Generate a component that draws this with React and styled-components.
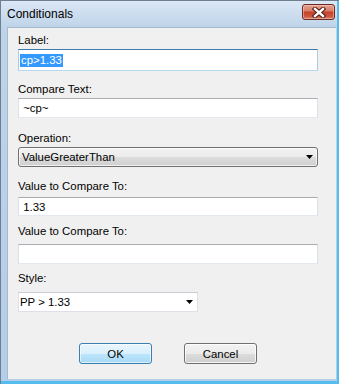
import React from "react"
import styled, { createGlobalStyle } from "styled-components"

const Global = createGlobalStyle`
  html, body { margin: 0; padding: 0; background: #ffffff; }
  body { font-family: "Liberation Sans", Arial, sans-serif; }
`

const Window = styled.div`
  box-sizing: border-box;
  width: 339px;
  height: 384px;
  display: flex;
  flex-direction: column;
  border-left: 1px solid #6f7f90;
  border-top: 1px solid #6f7f90;
  background: linear-gradient(to bottom, #dbe7f4 0px, #bfd4ea 26px, #b4cde8 100%);
  box-shadow: inset -2px -3px 0 #55bdee;
  overflow: hidden;
`

const TitleBar = styled.div`
  height: 26px;
  display: flex;
  align-items: center;
  justify-content: space-between;
  padding: 0 4px 0 6px;
  flex-shrink: 0;
`

const Title = styled.span`
  font-family: "Liberation Sans", Arial, sans-serif;
  font-size: 12px;
  color: #000;
  line-height: 26px;
`

const CloseButton = styled.div`
  align-self: flex-start;
  margin-top: 3px;
  box-sizing: border-box;
  width: 33px;
  height: 16px;
  border: 1px solid #6b2a22;
  border-radius: 3px;
  background: linear-gradient(to bottom, #e7a292 0%, #d9806c 40%, #c5432c 52%, #cc573d 80%, #d9806a 100%);
  box-shadow: inset 0 0 0 1px rgba(255, 220, 210, 0.45);
  display: flex;
  align-items: center;
  justify-content: center;
`

const Client = styled.div`
  box-sizing: border-box;
  width: 329px;
  height: 352px;
  margin-left: 6px;
  flex-shrink: 0;
  background: #f0f0f0;
  border-left: 1px solid #a5b8cc;
  border-top: 1px solid #a5b8cc;
  padding: 5px 18px 0 10px;
  display: flex;
  flex-direction: column;
  font-family: "Liberation Sans", Arial, sans-serif;
  font-size: 11.4px;
  color: #000;
`

const Field = styled.div`
  display: flex;
  flex-direction: column;
  margin-top: ${p => p.$top || 0}px;
`

const Label = styled.div`
  height: 14px;
  line-height: 14px;
  margin-bottom: ${p => p.$gap}px;
  white-space: nowrap;
`

const TextBox = styled.div`
  box-sizing: border-box;
  height: ${p => p.$h || 20}px;
  background: #ffffff;
  border: 1px solid ${p => (p.$focus ? "#a9cde6" : "#dde1e7")};
  border-top-color: ${p => (p.$focus ? "#3d7bad" : "#abadb3")};
  border-bottom-color: ${p => (p.$focus ? "#b7d9ed" : "#e3e9ef")};
  padding-left: 1px;
  display: flex;
  align-items: center;
  white-space: nowrap;
`

const Selected = styled.span`
  background: #3399ff;
  color: #ffffff;
  line-height: 13px;
  padding: 0 1px;
`

const Combo = styled.div`
  box-sizing: border-box;
  width: ${p => p.$w}px;
  height: 20px;
  display: flex;
  align-items: center;
  justify-content: space-between;
  padding: 0 4px 0 ${p => (p.$flat ? 1 : 3)}px;
  border: 1px solid ${p => (p.$flat ? "#dde1e7" : "#707070")};
  border-top-color: ${p => (p.$flat ? "#c9ccd2" : "#707070")};
  border-radius: ${p => (p.$flat ? 0 : 3)}px;
  background: ${p =>
    p.$flat
      ? "#ffffff"
      : "linear-gradient(to bottom, #f2f2f2 0%, #ebebeb 50%, #dddddd 51%, #cfcfcf 100%)"};
  box-shadow: ${p => (p.$flat ? "none" : "inset 0 0 0 1px rgba(255,255,255,0.7)")};
`

const Buttons = styled.div`
  display: flex;
  justify-content: center;
  gap: 32px;
  margin-top: 31px;
`

const Button = styled.div`
  box-sizing: border-box;
  width: 73px;
  height: 21px;
  border-radius: 3px;
  border: 1px solid ${p => (p.$default ? "#3c7fb1" : "#707070")};
  background: ${p =>
    p.$default
      ? "linear-gradient(to bottom, #eaf6fd 0%, #d9f0fc 50%, #bee6fd 51%, #a7d9f5 100%)"
      : "linear-gradient(to bottom, #f2f2f2 0%, #ebebeb 50%, #dddddd 51%, #cfcfcf 100%)"};
  box-shadow: inset 0 0 0 1px ${p => (p.$default ? "rgba(255,255,255,0.6)" : "rgba(255,255,255,0.8)")};
  display: flex;
  align-items: center;
  justify-content: center;
`

const Arrow = () => (
  <svg width="7" height="4" viewBox="0 0 7 4">
    <polygon points="0,0 7,0 3.5,4" fill="#000" />
  </svg>
)

const CloseX = () => (
  <svg width="14" height="11" viewBox="0 0 14 11">
    <path d="M3 2 L11 9 M11 2 L3 9" stroke="#4a1a12" strokeWidth="4.4" strokeLinecap="square" />
    <path d="M3 2 L11 9 M11 2 L3 9" stroke="#ffffff" strokeWidth="2.4" strokeLinecap="square" />
  </svg>
)

export default function App() {
  return (
    <>
      <Global />
      <Window>
        <TitleBar>
          <Title>Conditionals</Title>
          <CloseButton>
            <CloseX />
          </CloseButton>
        </TitleBar>
        <Client>
          <Field>
            <Label $gap={2}>Label:</Label>
            <TextBox $h={22} $focus>
              <Selected>cp&gt;1.33</Selected>
            </TextBox>
          </Field>
          <Field $top={11}>
            <Label $gap={2}>Compare Text:</Label>
            <TextBox>&nbsp;~cp~</TextBox>
          </Field>
          <Field $top={13}>
            <Label $gap={2}>Operation:</Label>
            <Combo $w={300}>
              <span>ValueGreaterThan</span>
              <Arrow />
            </Combo>
          </Field>
          <Field $top={12}>
            <Label $gap={4}>Value to Compare To:</Label>
            <TextBox $h={19}>&nbsp;1.33</TextBox>
          </Field>
          <Field $top={8}>
            <Label $gap={6}>Value to Compare To:</Label>
            <TextBox $h={20} />
          </Field>
          <Field $top={7}>
            <Label $gap={7}>Style:</Label>
            <Combo $w={180} $flat>
              <span>PP &gt; 1.33</span>
              <Arrow />
            </Combo>
          </Field>
          <Buttons>
            <Button $default>OK</Button>
            <Button>Cancel</Button>
          </Buttons>
        </Client>
      </Window>
    </>
  )
}
